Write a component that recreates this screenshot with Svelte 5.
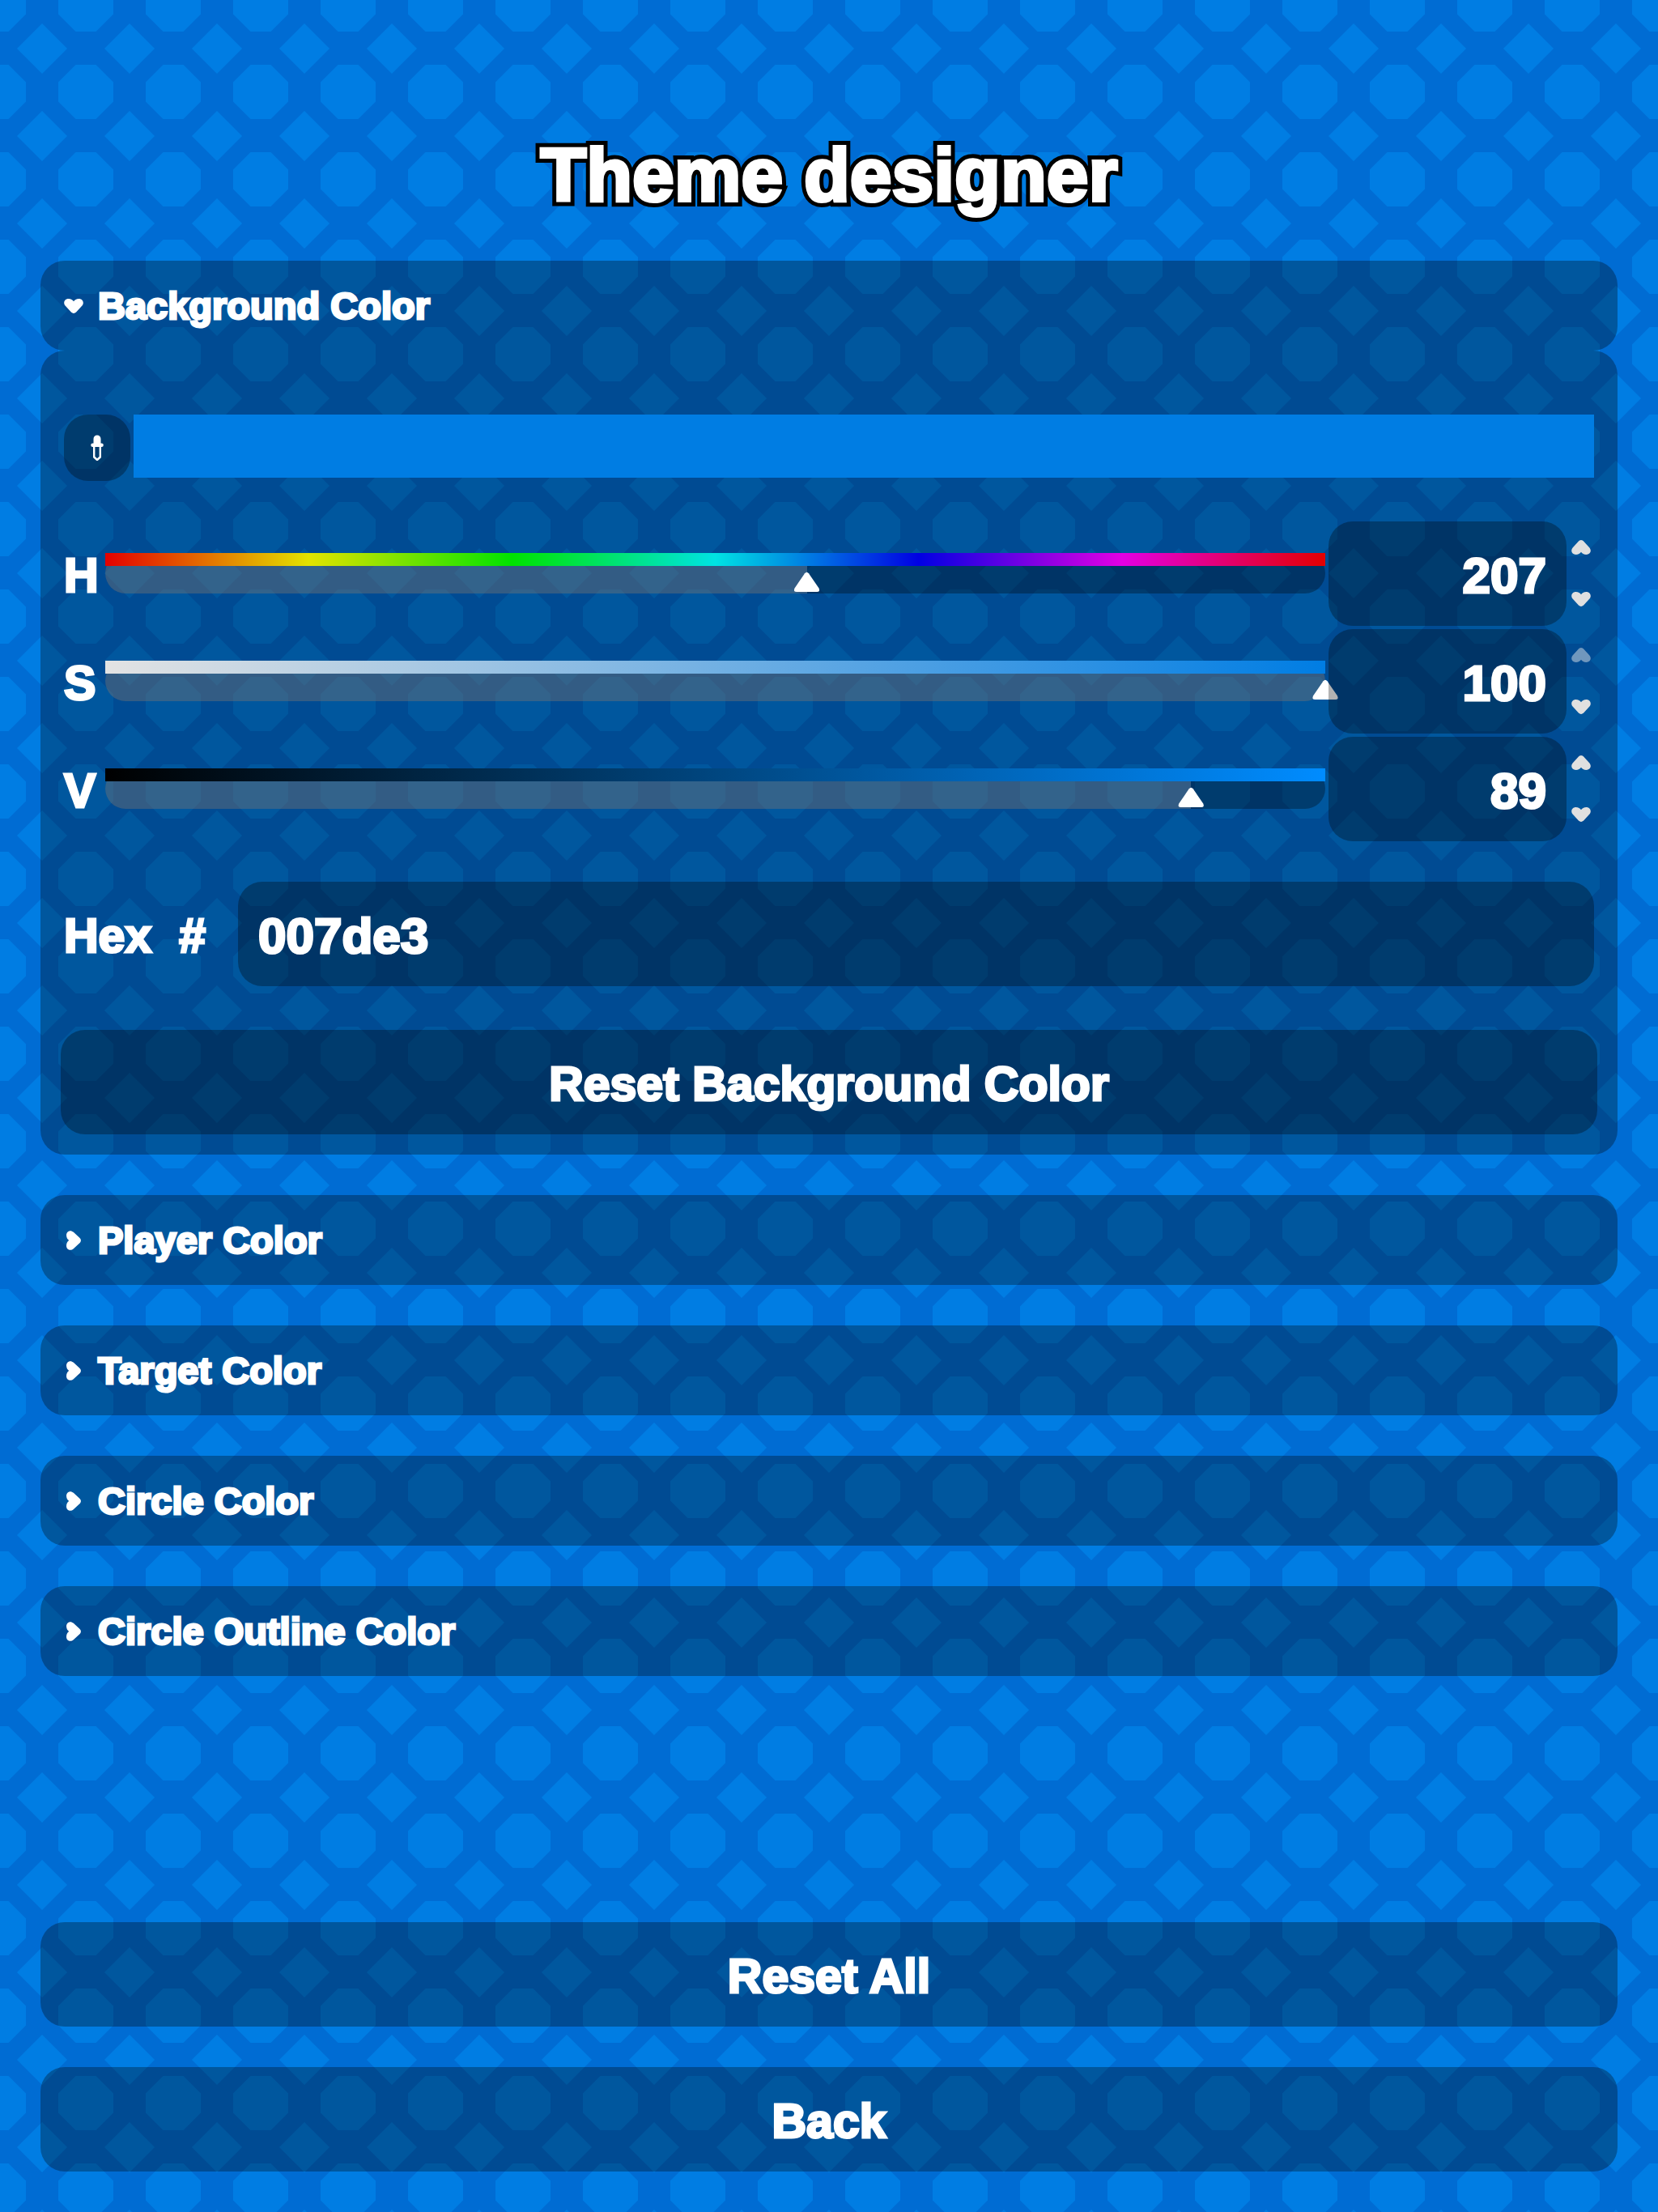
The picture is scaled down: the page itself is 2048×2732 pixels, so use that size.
<script>
  let hue = $state(207);
  let saturation = $state(100);
  let brightness = $state(89);
  let open = $state('Background Color');

  const sections = ['Background Color', 'Player Color', 'Target Color', 'Circle Color', 'Circle Outline Color'];

  function toHex(h, s, v) {
    const channel = (n) => {
      const k = (n + h / 60) % 6;
      const c = (v / 100) * (1 - (s / 100) * Math.max(0, Math.min(k, 4 - k, 1)));
      return Math.round(c * 255).toString(16).padStart(2, '0');
    };
    return channel(5) + channel(3) + channel(1);
  }

  let hex = $derived(toHex(hue, saturation, brightness));
  let hueStops = $derived([0, 60, 120, 180, 240, 300, 360].map((h) => '#' + toHex(h, 100, brightness)).join(', '));

  let channels = $derived([
    { key: 'H', value: hue, max: 360, stops: hueStops },
    { key: 'S', value: saturation, max: 100, stops: `#${toHex(hue, 0, brightness)}, #${toHex(hue, 100, brightness)}` },
    { key: 'V', value: brightness, max: 100, stops: `#000000, #${toHex(hue, saturation, 100)}` }
  ]);

  function setChannel(key, value, max) {
    const next = Math.max(0, Math.min(max, Number(value)));
    if (key === 'H') hue = next;
    if (key === 'S') saturation = next;
    if (key === 'V') brightness = next;
  }

  function reset() {
    hue = 207;
    saturation = 100;
    brightness = 89;
  }

  function toggle(name) {
    open = open === name ? '' : name;
  }
</script>

{#snippet heart(direction)}
  <svg class="heart {direction}" viewBox="0 0 24 24" aria-hidden="true">
    <path d="M1.8 11.8C-1.6 8 .8 3 5.6 3C8.6 3 10.8 4.4 12 6.2C13.2 4.4 15.4 3 18.4 3C23.2 3 25.6 8 22.2 11.8L15.8 18.8C13.4 21.6 10.6 21.6 8.2 18.8Z" />
  </svg>
{/snippet}

<main class="designer">
  <h1 data-text="Theme designer">Theme designer</h1>

  <div class="sections">
    {#each sections as name}
      <section>
        <button class="section-header" aria-expanded={open === name} onclick={() => toggle(name)}>
          {@render heart(open === name ? 'down' : 'right')}
          {name}
        </button>

        {#if open === name}
          <div class="panel">
            <div class="picker">
              <div class="sample-row">
                <button class="pick" aria-label="Pick a color from the screen">
                  <svg viewBox="0 0 16 32" aria-hidden="true">
                    <path d="M3.5 5a4.5 4.5 0 0 1 9 0v5.5h1a2.3 2.3 0 0 1 0 4.6h-11a2.3 2.3 0 0 1 0-4.6h1z" />
                    <path class="tube" d="M4.2 14v13.5L8 31l3.8-3.5V14" />
                  </svg>
                </button>
                <div class="sample" style="background: #{hex}"></div>
              </div>

              <div class="channels">
                {#each channels as channel}
                  <div class="channel">
                    <label for="channel-{channel.key}">{channel.key}</label>
                    <div class="slider">
                      <div class="track">
                        <div class="fill" style="width: {(channel.value / channel.max) * 100}%"></div>
                      </div>
                      <div class="ramp" style="background: linear-gradient(to right, {channel.stops})"></div>
                      <input
                        type="range"
                        aria-label="{channel.key} slider"
                        min="0"
                        max={channel.max}
                        value={channel.value}
                        oninput={(e) => setChannel(channel.key, e.target.value, channel.max)}
                      />
                    </div>
                    <input
                      class="number"
                      id="channel-{channel.key}"
                      type="number"
                      min="0"
                      max={channel.max}
                      value={channel.value}
                      onchange={(e) => setChannel(channel.key, e.target.value, channel.max)}
                    />
                    <div class="steps">
                      <button
                        aria-label="Increase {channel.key}"
                        disabled={channel.value >= channel.max}
                        onclick={() => setChannel(channel.key, channel.value + 1, channel.max)}
                      >
                        {@render heart('up')}
                      </button>
                      <button
                        aria-label="Decrease {channel.key}"
                        disabled={channel.value <= 0}
                        onclick={() => setChannel(channel.key, channel.value - 1, channel.max)}
                      >
                        {@render heart('down')}
                      </button>
                    </div>
                  </div>
                {/each}
              </div>

              <div class="hex-row">
                <label for="hex"><span>Hex</span><span>#</span></label>
                <input id="hex" type="text" value={hex} maxlength="6" />
              </div>
            </div>

            <button class="action" onclick={reset}>Reset {name}</button>
          </div>
        {/if}
      </section>
    {/each}
  </div>

  <div class="footer">
    <button class="action" onclick={reset}>Reset All</button>
    <button class="action">Back</button>
  </div>
</main>

<style>
  :global(body) {
    margin: 0;
    background-color: #006cd3;
    background-image: url("data:image/svg+xml,%3Csvg xmlns='http://www.w3.org/2000/svg' width='108' height='108'%3E%3Cpath fill='%23007de3' d='M41.5 20h25L88 41.5v24L66.5 87h-25L20 65.5v-24zM0 0h31L0 31zM108 0v31L77 0zM108 108H77l31-31zM0 108V77l31 31z'/%3E%3C/svg%3E");
    background-position: 52px 60px;
  }

  .designer {
    box-sizing: border-box;
    display: flex;
    flex-direction: column;
    min-height: 100vh;
    padding: 150px 50px 50px;
    color: #fff;
    font-family: "Liberation Sans", Arial, sans-serif;
    font-size: 59px;
    font-weight: bold;
    -webkit-text-stroke: 3px #fff;
    stroke-linejoin: round;
  }

  button,
  input {
    box-sizing: border-box;
    margin: 0;
    padding: 0;
    border: none;
    color: inherit;
    font: inherit;
    -webkit-text-stroke: inherit;
    background: rgba(0, 0, 0, 0.3);
  }

  button {
    cursor: pointer;
  }

  h1 {
    position: relative;
    z-index: 0;
    align-self: center;
    margin: 0 0 40px;
    font-size: 93px;
    line-height: 132px;
    -webkit-text-stroke: 4px #fff;
  }

  /* black outline behind the title */
  h1::before {
    content: attr(data-text);
    position: absolute;
    inset: 0;
    z-index: -1;
    -webkit-text-stroke: 14px #000;
  }

  .sections {
    display: flex;
    flex: 1;
    flex-direction: column;
    gap: 50px;
  }

  .section-header {
    display: flex;
    align-items: center;
    gap: 18px;
    width: 100%;
    height: 111px;
    padding: 0 29px;
    border-radius: 30px;
    font-size: 47px;
    text-align: left;
  }

  .heart {
    display: block;
    width: 24px;
    height: 24px;
    fill: currentColor;
  }

  .heart.right {
    transform: rotate(-90deg);
  }

  .heart.up {
    transform: rotate(180deg);
  }

  .panel {
    padding: 79px 25px 25px;
    border-radius: 30px;
    background: rgba(0, 0, 0, 0.3);
  }

  .picker {
    display: flex;
    flex-direction: column;
    gap: 50px;
    margin: 0 4px 54px;
  }

  .sample-row {
    display: flex;
    gap: 4px;
  }

  .pick {
    display: flex;
    align-items: center;
    justify-content: center;
    width: 82px;
    height: 82px;
    border-radius: 30px;
  }

  .pick svg {
    width: 16px;
    height: 32px;
    fill: #fff;
  }

  .pick .tube {
    fill: none;
    stroke: #fff;
    stroke-width: 2.4;
  }

  .sample {
    flex: 1;
    height: 78px;
  }

  .channels {
    display: flex;
    flex-direction: column;
    gap: 4px;
  }

  .channel {
    display: flex;
    align-items: center;
  }

  .channel label {
    width: 51px;
    padding-top: 4px;
  }

  .slider {
    position: relative;
    flex: 1;
    height: 50px;
    margin: 0 4px 1px 0;
  }

  .track {
    height: 50px;
    overflow: hidden;
    border-radius: 25px;
    background: rgba(0, 0, 0, 0.3);
    clip-path: inset(16px 0 0 0);
  }

  .fill {
    height: 100%;
    background: rgba(255, 255, 255, 0.2);
  }

  .ramp {
    position: absolute;
    inset: 0 0 auto;
    height: 16px;
  }

  .slider input {
    position: absolute;
    inset: 0 -16px;
    width: calc(100% + 32px);
    height: 50px;
    appearance: none;
    background: none;
  }

  .slider input::-webkit-slider-thumb {
    appearance: none;
    width: 32px;
    height: 50px;
    background: #fff;
    clip-path: path('M13.5 25.2Q16 22.2 18.5 25.2L31 43.5Q33 48 28.5 48H3.5Q-1 48 1 43.5Z');
  }

  .number {
    position: relative;
    width: 294px;
    height: 129px;
    padding: 4px 25px 0;
    border-radius: 30px;
    font-size: 62px;
    text-align: right;
    appearance: textfield;
  }

  .number::-webkit-inner-spin-button {
    appearance: none;
    margin: 0;
  }

  .steps {
    width: 32px;
    margin: 0 0 1px 2px;
  }

  .steps button {
    display: flex;
    align-items: center;
    justify-content: center;
    width: 100%;
    height: 64px;
    color: #e0e0e0;
    background: none;
  }

  .steps button:disabled {
    color: #7097bd;
  }

  .hex-row {
    display: flex;
    align-items: center;
  }

  .hex-row label {
    display: flex;
    gap: 34px;
    width: 215px;
    padding-top: 4px;
  }

  .hex-row input {
    flex: 1;
    min-width: 0;
    height: 129px;
    padding: 4px 25px 0;
    border-radius: 30px;
    font-size: 62px;
  }

  .action {
    display: block;
    width: 100%;
    height: 129px;
    padding-top: 4px;
    border-radius: 30px;
  }

  .footer {
    display: flex;
    flex-direction: column;
    gap: 50px;
    margin-top: 50px;
  }
</style>
